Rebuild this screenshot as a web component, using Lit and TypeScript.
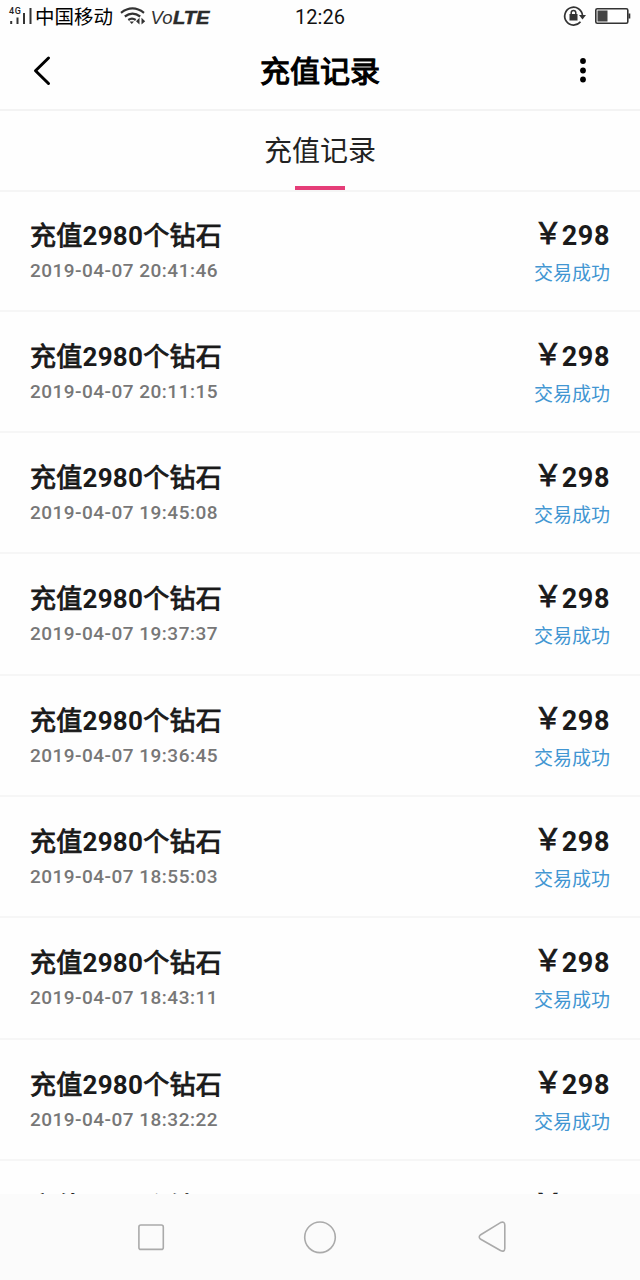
import { LitElement, html, css, svg } from "lit";
import { customElement, property } from "lit/decorators.js";

@customElement("status-bar")
class StatusBar extends LitElement {
  static styles = css`
    :host { display: flex; height: 33px; align-items: center; color: #111; }
    .left { display: block; flex: none; }
    .time { flex: 1; text-align: center; font-size: 20px; line-height: 32px; height: 32px; }
    .end { display: block; flex: none; }
  `;
  render() {
    return html`
      <svg class="left" width="220" height="33" viewBox="0 0 220 33">
        <text x="9" y="14" font-size="9" font-weight="500" fill="#222" textLength="12">4G</text>
        <path d="M11.200 21v3M17.500 17.500v6.500M24 13v11M30.500 8v16" stroke="#333" stroke-width="2" fill="none" />
        <text x="35" y="24" font-size="19.500">中国移动</text>
        <g fill="none" stroke="#333" stroke-width="2.200">
          <path d="M121 12.800q11.500-8.800 23 0M124.800 16.500q7.700-5.600 15.400 0M128.300 20q3.700-2.600 7.400 0" />
        </g>
        <path d="M129.500 21.500h4.500l-2.200 2.500zM139.500 17.800v6.700l-3.500-3.300zM141.500 17.800v6.700l3.700-3.300z" fill="#333" />
        <text x="150.500" y="24" font-size="19" font-family="Liberation Sans" font-style="italic" fill="#333" textLength="22" lengthAdjust="spacingAndGlyphs">Vo</text>
        <text x="173" y="24" font-size="19" font-family="Liberation Sans" font-style="italic" font-weight="700" fill="#2b2b2b" stroke="#2b2b2b" stroke-width="0.500" textLength="36.500" lengthAdjust="spacingAndGlyphs">LTE</text>
      </svg>
      <div class="time">12:26</div>
      <svg class="end" width="220" height="33" viewBox="420 0 220 33">
        <path d="M580.500 21.800a8.900 8.900 0 1 1 2-6.300" fill="none" stroke="#333" stroke-width="1.700" />
        <path d="M579 15h7l-3.500 4.500z" fill="#333" />
        <rect x="569.500" y="14" width="8" height="6.500" fill="#333" />
        <path d="M571.200 14.500v-1.800a2.300 2.300 0 0 1 4.600 0v1.800" fill="none" stroke="#333" stroke-width="1.500" />
        <rect x="595.800" y="8.800" width="32" height="14.400" rx="1.500" fill="#fff" stroke="#333" stroke-width="1.600" />
        <rect x="597.500" y="10.500" width="10" height="11" fill="#444" />
        <rect x="628.500" y="13.500" width="1.800" height="5" fill="#333" />
      </svg>
    `;
  }
}

@customElement("title-bar")
class TitleBar extends LitElement {
  static styles = css`
    :host { display: flex; height: 76px; border-bottom: 2px solid #f3f3f3; }
    .icon { display: block; flex: none; }
    .title { flex: 1; text-align: center; font-size: 30px; line-height: 78px; height: 76px; font-weight: 400; -webkit-text-stroke: 1.200px #000; color: #000; }
  `;
  render() {
    return html`
      <svg class="icon" width="100" height="76" viewBox="0 33 100 76">
        <path d="M48.500 58L35.500 70.700L48.500 83.500" fill="none" stroke="#000" stroke-width="3" stroke-linecap="round" stroke-linejoin="round" />
      </svg>
      <div class="title">充值记录</div>
      <svg class="icon" width="100" height="76" viewBox="540 33 100 76">
        ${[61, 70.5, 79.5].map((y) => svg`<circle cx="583" cy=${y} r="2.900" fill="#000" />`)}
      </svg>
    `;
  }
}

@customElement("record-row")
class RecordRow extends LitElement {
  @property() time = "";
  static styles = css`
    :host { display: flex; justify-content: space-between; height: 121.300px; flex: none; box-sizing: border-box; padding: 27px 30px 0; border-bottom: 2px solid #f6f6f6; white-space: nowrap; }
    :host(:first-child) { height: 119.800px; padding-top: 26px; }
    :host(:last-child) { padding-top: 28px; }
    .side { display: flex; flex-direction: column; }
    .name { font-size: 26px; line-height: 36px; height: 36px; font-weight: 700; letter-spacing: 0.250px; color: #1a1a1a; }
    .cjk { font-weight: 400; -webkit-text-stroke: 0.900px #1a1a1a; }
    .time { font-size: 19px; line-height: 34px; font-weight: 500; letter-spacing: 0.480px; color: #777; }
    .amount { font-size: 27px; line-height: 36px; height: 36px; font-weight: 700; letter-spacing: 0.600px; text-align: right; color: #1a1a1a; }
    .yen { font-size: 29px; line-height: 28px; vertical-align: 1px; letter-spacing: -0.800px; font-weight: 400; -webkit-text-stroke: 0.900px #1a1a1a; }
    .state { font-size: 19px; line-height: 39px; color: #4296d2; text-align: right; }
  `;
  render() {
    return html`
      <div class="side"><div class="name"><span class="cjk">充值</span>2980<span class="cjk">个钻石</span></div><div class="time">${this.time}</div></div>
      <div class="side"><div class="amount"><span class="yen">￥</span>298</div><div class="state">交易成功</div></div>
    `;
  }
}

@customElement("nav-bar")
class NavBar extends LitElement {
  static styles = css`
    :host { display: block; height: 86px; background: #fbfbfb; }
    .keys { display: block; }
  `;
  render() {
    return html`
      <svg class="keys" width="640" height="86" viewBox="0 1194 640 86" fill="none" stroke="#aaa" stroke-width="1.600">
        <rect x="138.900" y="1225" width="24.400" height="24.400" rx="2" />
        <circle cx="320" cy="1237.300" r="15.300" />
        <path d="M480.300 1235L500.500 1222.600Q504.700 1221 504.800 1225V1248.500Q504.500 1252.500 500.500 1250.500L480.300 1239Q478.200 1237 480.300 1235Z" stroke-linejoin="round" />
      </svg>
    `;
  }
}

@customElement("app-root")
class AppRoot extends LitElement {
  static styles = css`
    :host { display: flex; flex-direction: column; width: 640px; height: 1280px; overflow: hidden; background: #fefefe; font-family: Roboto, "Noto Sans CJK SC", sans-serif; }
    .tab { height: 81px; display: flex; flex-direction: column; align-items: center; border-bottom: 2px solid #f5f5f5; box-sizing: border-box; flex: none; }
    .label { font-size: 28px; line-height: 82px; height: 75px; color: #222; font-weight: 400; }
    .mark { width: 50px; height: 4px; background: #e53d78; flex: none; }
    .list { flex: 1; min-height: 0; overflow: hidden; display: flex; flex-direction: column; }
  `;
  times = [
    "2019-04-07 20:41:46",
    "2019-04-07 20:11:15",
    "2019-04-07 19:45:08",
    "2019-04-07 19:37:37",
    "2019-04-07 19:36:45",
    "2019-04-07 18:55:03",
    "2019-04-07 18:43:11",
    "2019-04-07 18:32:22",
    "",
  ];
  render() {
    return html`
      <status-bar></status-bar>
      <title-bar></title-bar>
      <div class="tab"><div class="label">充值记录</div><div class="mark"></div></div>
      <div class="list">${this.times.map((t) => html`<record-row .time=${t}></record-row>`)}</div>
      <nav-bar></nav-bar>
    `;
  }
}
